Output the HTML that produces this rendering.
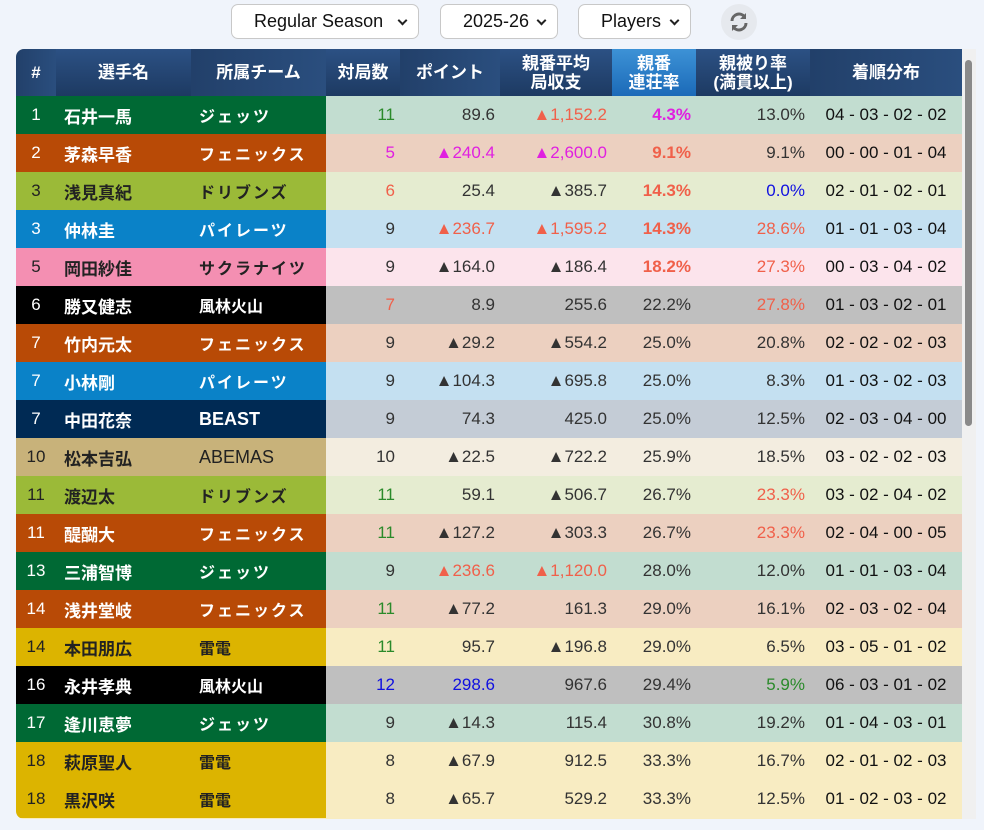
<!DOCTYPE html>
<html><head><meta charset="utf-8"><style>
body{margin:0;background:#f0f4fb;width:984px;height:830px;overflow:hidden;font-family:"Liberation Sans","Noto Sans CJK JP",sans-serif;}
.sel{position:absolute;top:4px;height:35px;border:1px solid #c8c8c8;border-radius:7px;background:#fff;font-size:18px;color:#111;box-sizing:border-box;line-height:33px;padding-left:22px}
.sel:after{content:"";position:absolute;right:12px;top:12px;width:5px;height:5px;border-right:2px solid #222;border-bottom:2px solid #222;transform:rotate(45deg)}
.wrap{position:absolute;left:16px;top:49px;width:960px;height:770px;border-radius:8px;overflow:hidden;background:#f8ecc0}
table{border-collapse:collapse;table-layout:fixed;width:946px}
th{height:47px;padding:0;color:#fff;font-size:17px;font-weight:bold;line-height:19px;background:linear-gradient(#2c5184,#1d3a62);font-family:"Liberation Sans","Noto Sans CJK JP",sans-serif}
th.h1{background:linear-gradient(90deg,#22406a,#2a4e7e)}
th.hl{background:linear-gradient(#3d92d6,#1b6ab8)}
td{height:38px;padding:0 5px;font-size:17px;color:#333;text-align:right;white-space:nowrap;overflow:hidden}
td.r{text-align:center;color:inherit;padding:0}
td.n{text-align:left;padding-left:8px;font-weight:bold;color:inherit;font-family:"Noto Sans CJK JP",sans-serif;font-size:17px}
td.t{text-align:left;padding-left:8px;font-weight:bold;color:inherit;font-family:"Noto Sans CJK JP",sans-serif;font-size:16px}
td.t.k{letter-spacing:2px}
td.t.l{font-family:"Liberation Sans",sans-serif;font-size:18px}
td.d{text-align:center;color:#111;padding:0}
.o{color:#f0604a}.m{color:#e020e0}.g{color:#2a8a2a}.b{color:#1010e0}.B{font-weight:bold}
tr.J td.r,tr.J td.n,tr.J td.t{background:#006934;color:#fff} tr.J td{background:#c2ddd0}
tr.P td.r,tr.P td.n,tr.P td.t{background:#b84a06;color:#fff} tr.P td{background:#ecd0c0}
tr.D td.r,tr.D td.n,tr.D td.t{background:#9bba38;color:#222} tr.D td{background:#e5ecd0}
tr.I td.r,tr.I td.n,tr.I td.t{background:#0a82c8;color:#fff} tr.I td{background:#c4e0f1}
tr.S td.r,tr.S td.n,tr.S td.t{background:#f48fb2;color:#222} tr.S td{background:#fce4ec}
tr.F td.r,tr.F td.n,tr.F td.t{background:#000;color:#fff} tr.F td{background:#bfbfbf}
tr.X td.r,tr.X td.n,tr.X td.t{background:#002a54;color:#fff} tr.X td{background:#c4ccd6}
tr.A td.r,tr.A td.n,tr.A td.t{background:#c8b27a;color:#222} tr.A td{background:#f3ede0}
tr.R td.r,tr.R td.n,tr.R td.t{background:#dcb400;color:#222} tr.R td{background:#f8ecc2}
.sb{position:absolute;left:962px;top:49px;width:14px;height:770px;background:#f0f0f0}
.th{position:absolute;left:965px;top:60px;width:7px;height:366px;background:#8a8a8a;border-radius:4px}
</style></head><body>
<div class="sel" style="left:231px;width:188px">Regular Season</div>
<div class="sel" style="left:440px;width:118px">2025-26</div>
<div class="sel" style="left:578px;width:113px">Players</div>
<div style="position:absolute;left:721px;top:4px;width:36px;height:36px;border-radius:50%;background:#e6e9ee"><svg width="36" height="36" viewBox="0 0 36 36"><path d="M11 17a7 7 0 0 1 12.5-4.3M25 19a7 7 0 0 1-12.5 4.3" stroke="#666" stroke-width="3" fill="none"/><path d="M25 9v6h-6zM11 27v-6h6z" fill="#666"/></svg></div>
<div class="wrap"><table>
<colgroup><col style="width:40px"><col style="width:135px"><col style="width:135px"><col style="width:74px"><col style="width:100px"><col style="width:112px"><col style="width:84px"><col style="width:114px"><col style="width:152px"></colgroup>
<tr><th class="h1">#</th><th>選手名</th><th class="h1">所属チーム</th><th>対局数</th><th class="h1">ポイント</th><th>親番平均<br>局収支</th><th class="hl">親番<br>連荘率</th><th>親被り率<br>(満貫以上)</th><th class="h1">着順分布</th></tr>
<tr class="J"><td class="r">1</td><td class="n">石井一馬</td><td class="t k">ジェッツ</td><td class="g">11</td><td>89.6</td><td class="o">▲1,152.2</td><td class="m B">4.3%</td><td>13.0%</td><td class="d">04 - 03 - 02 - 02</td></tr>
<tr class="P"><td class="r">2</td><td class="n">茅森早香</td><td class="t k">フェニックス</td><td class="m">5</td><td class="m">▲240.4</td><td class="m">▲2,600.0</td><td class="o B">9.1%</td><td>9.1%</td><td class="d">00 - 00 - 01 - 04</td></tr>
<tr class="D"><td class="r">3</td><td class="n">浅見真紀</td><td class="t k">ドリブンズ</td><td class="o">6</td><td>25.4</td><td>▲385.7</td><td class="o B">14.3%</td><td class="b">0.0%</td><td class="d">02 - 01 - 02 - 01</td></tr>
<tr class="I"><td class="r">3</td><td class="n">仲林圭</td><td class="t k">パイレーツ</td><td>9</td><td class="o">▲236.7</td><td class="o">▲1,595.2</td><td class="o B">14.3%</td><td class="o">28.6%</td><td class="d">01 - 01 - 03 - 04</td></tr>
<tr class="S"><td class="r">5</td><td class="n">岡田紗佳</td><td class="t k">サクラナイツ</td><td>9</td><td>▲164.0</td><td>▲186.4</td><td class="o B">18.2%</td><td class="o">27.3%</td><td class="d">00 - 03 - 04 - 02</td></tr>
<tr class="F"><td class="r">6</td><td class="n">勝又健志</td><td class="t">風林火山</td><td class="o">7</td><td>8.9</td><td>255.6</td><td>22.2%</td><td class="o">27.8%</td><td class="d">01 - 03 - 02 - 01</td></tr>
<tr class="P"><td class="r">7</td><td class="n">竹内元太</td><td class="t k">フェニックス</td><td>9</td><td>▲29.2</td><td>▲554.2</td><td>25.0%</td><td>20.8%</td><td class="d">02 - 02 - 02 - 03</td></tr>
<tr class="I"><td class="r">7</td><td class="n">小林剛</td><td class="t k">パイレーツ</td><td>9</td><td>▲104.3</td><td>▲695.8</td><td>25.0%</td><td>8.3%</td><td class="d">01 - 03 - 02 - 03</td></tr>
<tr class="X"><td class="r">7</td><td class="n">中田花奈</td><td class="t l">BEAST</td><td>9</td><td>74.3</td><td>425.0</td><td>25.0%</td><td>12.5%</td><td class="d">02 - 03 - 04 - 00</td></tr>
<tr class="A"><td class="r">10</td><td class="n">松本吉弘</td><td class="t l" style="font-weight:normal">ABEMAS</td><td>10</td><td>▲22.5</td><td>▲722.2</td><td>25.9%</td><td>18.5%</td><td class="d">03 - 02 - 02 - 03</td></tr>
<tr class="D"><td class="r">11</td><td class="n">渡辺太</td><td class="t k">ドリブンズ</td><td class="g">11</td><td>59.1</td><td>▲506.7</td><td>26.7%</td><td class="o">23.3%</td><td class="d">03 - 02 - 04 - 02</td></tr>
<tr class="P"><td class="r">11</td><td class="n">醍醐大</td><td class="t k">フェニックス</td><td class="g">11</td><td>▲127.2</td><td>▲303.3</td><td>26.7%</td><td class="o">23.3%</td><td class="d">02 - 04 - 00 - 05</td></tr>
<tr class="J"><td class="r">13</td><td class="n">三浦智博</td><td class="t k">ジェッツ</td><td>9</td><td class="o">▲236.6</td><td class="o">▲1,120.0</td><td>28.0%</td><td>12.0%</td><td class="d">01 - 01 - 03 - 04</td></tr>
<tr class="P"><td class="r">14</td><td class="n">浅井堂岐</td><td class="t k">フェニックス</td><td class="g">11</td><td>▲77.2</td><td>161.3</td><td>29.0%</td><td>16.1%</td><td class="d">02 - 03 - 02 - 04</td></tr>
<tr class="R"><td class="r">14</td><td class="n">本田朋広</td><td class="t">雷電</td><td class="g">11</td><td>95.7</td><td>▲196.8</td><td>29.0%</td><td>6.5%</td><td class="d">03 - 05 - 01 - 02</td></tr>
<tr class="F"><td class="r">16</td><td class="n">永井孝典</td><td class="t">風林火山</td><td class="b">12</td><td class="b">298.6</td><td>967.6</td><td>29.4%</td><td class="g">5.9%</td><td class="d">06 - 03 - 01 - 02</td></tr>
<tr class="J"><td class="r">17</td><td class="n">逢川恵夢</td><td class="t k">ジェッツ</td><td>9</td><td>▲14.3</td><td>115.4</td><td>30.8%</td><td>19.2%</td><td class="d">01 - 04 - 03 - 01</td></tr>
<tr class="R"><td class="r">18</td><td class="n">萩原聖人</td><td class="t">雷電</td><td>8</td><td>▲67.9</td><td>912.5</td><td>33.3%</td><td>16.7%</td><td class="d">02 - 01 - 02 - 03</td></tr>
<tr class="R"><td class="r">18</td><td class="n">黒沢咲</td><td class="t">雷電</td><td>8</td><td>▲65.7</td><td>529.2</td><td>33.3%</td><td>12.5%</td><td class="d">01 - 02 - 03 - 02</td></tr>
</table></div>
<div class="sb"></div><div class="th"></div>
</body></html>
